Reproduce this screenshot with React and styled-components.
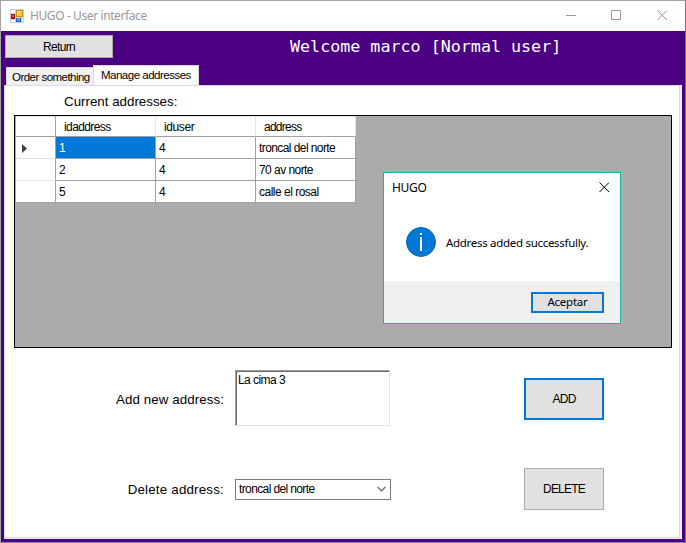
import React from "react";
import styled, { createGlobalStyle } from "styled-components";

const Global = createGlobalStyle`
  * { box-sizing: border-box; }
  html, body { margin: 0; padding: 0; overflow: hidden; background: #9b9b9b; }
  body { font-family: "Liberation Sans", Arial, sans-serif; font-size: 12px; color: #000; }
  button, textarea { font: inherit; color: inherit; margin: 0; border-radius: 0; }
`;

const Text = styled.span`
  display: block;
  white-space: pre;
  line-height: 16px;
  font-size: ${(p) => p.$size || 12}px;
  letter-spacing: ${(p) => p.$track || 0}px;
  font-family: ${(p) => (p.$segoe ? '"Noto Sans", "Open Sans", sans-serif' : "inherit")};
`;

const Window = styled.div`
  position: relative;
  width: 686px;
  height: 543px;
  display: flex;
  flex-direction: column;
  border: 1px solid #a3a3a3;
  border-right-color: #77708a;
  border-bottom-color: #8b84a0;
  background: #4b0082;
`;

const TitleBar = styled.header`
  height: 30px;
  flex: none;
  display: flex;
  align-items: center;
  background: #fff;
  color: #999;
  padding-left: 9px;
`;

const TitleText = styled(Text)`
  margin-left: 6px;
  flex: 1;
`;

const Controls = styled.div`
  display: flex;
  svg { display: block; }
`;

const TopBar = styled.div`
  height: 34px;
  flex: none;
  display: flex;
  align-items: flex-start;
  padding: 4px 0 0 4px;
`;

const Button = styled.button`
  width: ${(p) => p.$w}px;
  height: ${(p) => p.$h}px;
  flex: none;
  display: flex;
  align-items: center;
  justify-content: center;
  padding: 0;
  background: #e1e1e1;
  border: ${(p) => (p.$focus ? "2px solid #0078d7" : "1px solid #adadad")};
`;

const Welcome = styled.h1`
  margin: 1px 0 0 177px;
  font: 400 16.7px/20px "DejaVu Sans Mono", monospace;
  color: #fff;
  white-space: pre;
`;

const Tabs = styled.div`
  height: 20px;
  flex: none;
  display: flex;
  align-items: flex-end;
  padding-left: 5px;
`;

const Tab = styled.div`
  width: ${(p) => p.$w}px;
  height: ${(p) => (p.$active ? 20 : 18)}px;
  padding: ${(p) => (p.$active ? "1px 0 0 7px" : "1px 0 0 5px")};
  background: ${(p) => (p.$active ? "#fff" : "#f0f0f0")};
  border: 1px solid #d9d9d9;
  border-bottom: 0;
  ${(p) => !p.$active && "border-right: 0;"}
`;

const Page = styled.main`
  flex: 1;
  margin: 0 3px;
  margin-bottom: 3px;
  border: solid #dcdcdc;
  border-width: 0 0 0 1px;
  background: #fff;
  box-shadow: inset -2px -1px #f0f0f0, inset -3px -2px #d9d9d9, inset 0 1px #e0d4e8;
  padding: 8px 0 0 9px;
`;

const GridTitle = styled(Text)`
  margin-left: 50px;
  padding-top: 1px;
`;

const GridArea = styled.div`
  width: 658px;
  height: 233px;
  margin-top: 5px;
  border: 1px solid #000;
  background: #ababab;
  padding-left: 1px;
`;

const Row = styled.div`
  display: grid;
  grid-template-columns: 40px 100px 100px 100px;
  height: ${(p) => (p.$head ? 21 : 22)}px;
  width: 340px;
  background: #fff;
  ${(p) => p.$head && "box-shadow: inset 0 1px #e3e3e3;"}
`;

const Cell = styled.div`
  display: flex;
  align-items: center;
  padding: ${(p) => (p.$head ? "2px 0 0 8px" : "1px 0 0 3px")};
  border-right: 1px solid ${(p) => (p.$head ? "#e5e5e5" : "#a0a0a0")};
  border-bottom: 1px solid #a0a0a0;
  background: ${(p) => (p.$selected ? "#0078d7" : "transparent")};
  color: ${(p) => (p.$selected ? "#fff" : "#000")};
`;

const RowHeader = styled(Cell)`
  padding-left: 6px;
  border-right-color: #a0a0a0;
  border-bottom-color: ${(p) => (p.$dark ? "#a0a0a0" : "#e3e3e3")};
`;

const FormRow = styled.div`
  display: flex;
  align-items: center;
  height: 56px;
  margin-top: ${(p) => p.$top}px;
`;

const FieldLabel = styled(Text)`
  width: 210px;
  text-align: right;
  padding-top: ${(p) => p.$drop || 0}px;
`;

const AddressInput = styled.textarea`
  width: 155px;
  height: 56px;
  margin-left: 11px;
  padding: 0 2px;
  resize: none;
  outline: 0;
  overflow: hidden;
  border: 1px solid #a0a0a0;
  border-right-color: #e3e3e3;
  border-bottom-color: #e3e3e3;
  box-shadow: inset 1px 1px #696969;
  line-height: 18px;
  letter-spacing: -0.6px;
  word-spacing: 0.2px;
`;

const Select = styled.div`
  width: 156px;
  height: 21px;
  margin-left: 11px;
  padding: 0 4px 0 3px;
  display: flex;
  align-items: center;
  justify-content: space-between;
  border: 1px solid #7a7a7a;
`;

const Action = styled.div`
  margin-left: ${(p) => p.$gap}px;
  padding-top: ${(p) => p.$drop || 0}px;
`;

const Dialog = styled.section`
  position: absolute;
  left: 382px;
  top: 171px;
  width: 238px;
  height: 152px;
  display: flex;
  flex-direction: column;
  background: #fff;
  border: 1px solid #18b99a;
`;

const DialogHeader = styled.div`
  height: 28px;
  display: flex;
  align-items: center;
  justify-content: space-between;
  padding: 1px 10px 0 8px;
`;

const DialogBody = styled.div`
  flex: 1;
  display: flex;
  align-items: center;
  gap: 10px;
  padding: 1px 0 0 22px;
`;

const Message = styled(Text)`
  padding-top: 2px;
`;

const DialogFooter = styled.div`
  height: 42px;
  display: flex;
  align-items: center;
  justify-content: flex-end;
  padding-right: 16px;
  background: #f0f0f0;
`;

const FormIcon = () => (
  <svg width="14" height="14" shapeRendering="crispEdges">
    <path d="M0 0h14v14H0z" fill="#c9ced6" />
    <path d="M1 1h4v3H1zM1 11h4v2H1zM12 9h1v4h-1z" fill="#fff" />
    <path d="M6 1h7v7H6z" fill="#c98d12" />
    <path d="M7 2h5v5H7z" fill="#fbc93d" />
    <path d="M7 2h4v1H8v3H7z" fill="#ffe69a" />
    <path d="M1 5h4v5H1z" fill="#9c1b10" />
    <path d="M2 6h2v2H2z" fill="#e2604b" />
    <path d="M6 9h5v4H6z" fill="#2463b8" />
    <path d="M7 9h3v3H7z" fill="#5e9be8" />
  </svg>
);

const WindowControls = () => (
  <svg width="138" height="30" fill="none" stroke="#999">
    <path d="M19 14.500h10" />
    <path d="M64.500 9.500h9v9h-9z" />
    <path d="M110.500 9.500l9.500 9.500M120 9.500l-9.500 9.500" />
  </svg>
);

const CloseIcon = () => (
  <svg width="11" height="11" stroke="#000" strokeWidth="1">
    <path d="M.5.5l9.500 9.500M10 .5l-9.500 9.500" />
  </svg>
);

const InfoIcon = () => (
  <svg width="30" height="30">
    <circle cx="15" cy="15" r="14.500" fill="#0078d7" stroke="#0c61a4" />
    <path d="M14 6h2v2h-2zM14 10h2v14h-2z" fill="#fff" />
  </svg>
);

const Chevron = () => (
  <svg width="9" height="6" fill="none" stroke="#606060" strokeWidth="1.200">
    <path d="M.5.8l4 4 4-4" />
  </svg>
);

const RowMarker = () => (
  <svg width="5" height="9">
    <path d="M0 0l5 4.500-5 4.500z" fill="#404040" />
  </svg>
);

const columns = [
  ["idaddress", -0.6],
  ["iduser", -0.4],
  ["address", -0.75],
];

const rows = [
  ["1", "4", "troncal del norte", -0.58],
  ["2", "4", "70 av norte", -0.55],
  ["5", "4", "calle el rosal", -0.5],
];

export default function App() {
  return (
    <>
      <Global />
      <Window>
        <TitleBar>
          <FormIcon />
          <TitleText $segoe $size={12} $track={-0.4}>HUGO - User interface</TitleText>
          <Controls><WindowControls /></Controls>
        </TitleBar>
        <TopBar>
          <Button $w={108} $h={23}><Text $track={-0.65}>Return</Text></Button>
          <Welcome>Welcome marco [Normal user]</Welcome>
        </TopBar>
        <Tabs>
          <Tab $w={87}><Text $size={11.5} $track={-0.53}>Order something</Text></Tab>
          <Tab $active $w={106}><Text $size={11.5} $track={-0.5}>Manage addresses</Text></Tab>
        </Tabs>
        <Page>
          <GridTitle $size={13.33}>Current addresses:</GridTitle>
          <GridArea>
            <Row $head>
              <RowHeader $dark />
              {columns.map(([name, track]) => (
                <Cell key={name} $head><Text $track={track}>{name}</Text></Cell>
              ))}
            </Row>
            {rows.map(([id, user, address, track], i) => (
              <Row key={id}>
                <RowHeader $dark={i === 2}>{i === 0 && <RowMarker />}</RowHeader>
                <Cell $selected={i === 0}><Text>{id}</Text></Cell>
                <Cell><Text>{user}</Text></Cell>
                <Cell><Text $track={track}>{address}</Text></Cell>
              </Row>
            ))}
          </GridArea>
          <FormRow $top={22}>
            <FieldLabel $drop={3} $size={13.33} $track={0.08}>Add new address:</FieldLabel>
            <AddressInput defaultValue="La cima 3" spellCheck={false} />
            <Action $gap={134} $drop={2}>
              <Button $focus $w={80} $h={42}><Text $track={-0.7}>ADD</Text></Button>
            </Action>
          </FormRow>
          <FormRow $top={35}>
            <FieldLabel $drop={1} $size={13.33} $track={0.2}>Delete address:</FieldLabel>
            <Select><Text $track={-0.62}>troncal del norte</Text><Chevron /></Select>
            <Action $gap={133}>
              <Button $w={80} $h={42}><Text $track={-0.8}>DELETE</Text></Button>
            </Action>
          </FormRow>
        </Page>
        <Dialog>
          <DialogHeader>
            <Text $segoe $track={-0.3}>HUGO</Text>
            <CloseIcon />
          </DialogHeader>
          <DialogBody>
            <InfoIcon />
            <Message $segoe $size={11.5} $track={-0.3}>Address added successfully.</Message>
          </DialogBody>
          <DialogFooter>
            <Button $focus $w={73} $h={21}><Text $segoe $size={11.5} $track={-0.25}>Aceptar</Text></Button>
          </DialogFooter>
        </Dialog>
      </Window>
    </>
  );
}
